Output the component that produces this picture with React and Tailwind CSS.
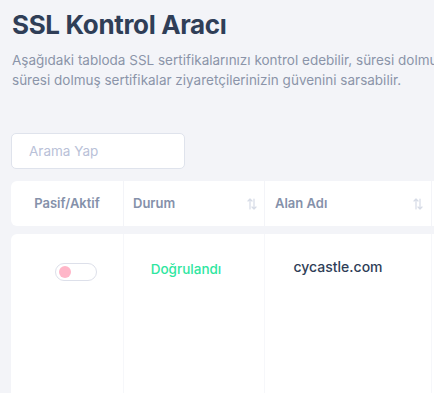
import React from "react";

function SortIcon() {
  return (
    <svg width="10" height="12" viewBox="0 0 10 12" fill="none" stroke="#d6dbe6" strokeWidth="1.2" strokeLinecap="round" strokeLinejoin="round">
      <path d="M3 11V1M1 3l2-2 2 2" />
      <path d="M7 1v10M5 9l2 2 2-2" />
    </svg>
  );
}

export default function App() {
  return (
    <div className="min-h-[393px] w-[434px] overflow-hidden bg-[#f3f4f8] pl-[11px] pt-[7px]" style={{ fontFamily: "Inter, 'Noto Sans', sans-serif" }}>
      <h1 className="pl-[1px] text-[26px] font-bold leading-[36px] tracking-[-0.35px] text-[#2f3e57]">SSL Kontrol Aracı</h1>
      <p className="mt-[7px] whitespace-nowrap pl-[1px] text-[13.5px] leading-[20px] text-[#8b94a9]">
        Aşağıdaki tabloda SSL sertifikalarınızı kontrol edebilir, süresi dolmuş sertifikaları yenileyebilirsiniz.
        <br />
        süresi dolmuş sertifikalar ziyaretçilerinizin güvenini sarsabilir.
      </p>
      <div className="mt-[43px] flex h-[36px] w-[174px] items-center rounded-[5px] border border-[#dfe3ec] bg-white pl-[17px] text-[13.5px] text-[#b9c1d8]">
        Arama Yap
      </div>
      <div className="mt-[12px] flex w-[440px] flex-col gap-[8px]">
        <div className="flex h-[45px] rounded-l-[6px] bg-white text-[13px] font-semibold text-[#8591aa]">
          <div className="flex w-[113px] items-center justify-center border-r border-[#f3f4f8]">Pasif/Aktif</div>
          <div className="flex w-[141px] items-center justify-between border-r border-[#f3f4f8] pl-[9px] pr-[7px]">
            <span>Durum</span>
            <SortIcon />
          </div>
          <div className="flex w-[167px] items-center justify-between border-r border-[#f3f4f8] pl-[10px] pr-[8px]">
            <span>Alan Adı</span>
            <SortIcon />
          </div>
        </div>
        <div className="flex h-[170px] rounded-tl-[6px] bg-white">
          <div className="flex w-[113px] justify-center border-r border-[#f6f7fa] pl-[17px] pt-[29px]">
            <div className="flex h-[18px] w-[42px] items-center rounded-full border border-[#dde0ea] bg-white pl-[3px]">
              <div className="h-[12px] w-[12px] rounded-full bg-[#ffb6c8]" />
            </div>
          </div>
          <div className="flex w-[141px] justify-center border-r border-[#f6f7fa] pr-[16px] pt-[25px]">
            <span className="text-[13.5px] font-medium leading-[20px] text-[#2ee6a0]">Doğrulandı</span>
          </div>
          <div className="flex w-[167px] justify-center border-r border-[#f6f7fa] pr-[20px] pt-[23px]">
            <span className="text-[14px] font-medium leading-[20px] text-[#2f3e57]">cycastle.com</span>
          </div>
        </div>
      </div>
    </div>
  );
}
